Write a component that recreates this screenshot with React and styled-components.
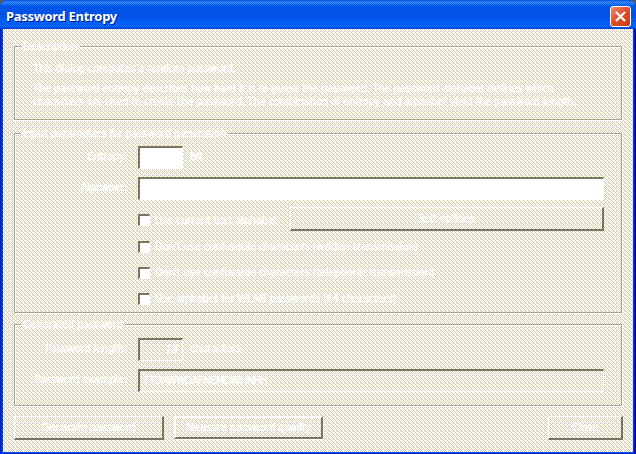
import React from "react";
import styled, { createGlobalStyle, css } from "styled-components";

const Global = createGlobalStyle`
  * { box-sizing: border-box; }
  body { margin: 0; background: #555; overflow: hidden; }
`;

/* Fixed attachment keeps the dither in phase across nested surfaces. */
const dither = css`
  background:
    conic-gradient(from 270deg at 1px 1px, #ffff99 90deg, transparent 0) 1px 0 / 4px 4px fixed,
    conic-gradient(from 270deg at 1px 1px, #ffff99 90deg, transparent 0) 3px 2px / 4px 4px fixed,
    conic-gradient(from 270deg at 1px 1px, #ffcccc 90deg, transparent 0) 2px 1px / 4px 4px fixed,
    repeating-conic-gradient(#c8c8c0 0 25%, #ffffff 0 50%) 0 0 / 2px 2px fixed;
`;

const Window = styled.div`
  width: 636px;
  height: 454px;
  display: flex;
  flex-direction: column;
  border-radius: 7px 7px 0 0;
  overflow: hidden;
  background: linear-gradient(90deg, #0022cc 1px, #0055ff 3px, #0055ff 633px, #0022cc 634px, #000099);
  font: 11px/13px "DejaVu Sans Condensed", "DejaVu Sans", sans-serif;
  letter-spacing: -0.17px;
  color: #fff;
  -webkit-text-stroke: 0.35px #fff;
`;

const TitleBar = styled.header`
  height: 29px;
  flex: none;
  display: flex;
  align-items: center;
  justify-content: space-between;
  padding: 3px 5px 0 6px;
  background:
    repeating-conic-gradient(#0033cc66 0 25%, transparent 0 50%) 0 5px / 2px 2px,
    linear-gradient(#0058e0 0, #3a93ff 2px, #2080ff 4px, #0060ee 6px, #0058ee 15px, #0064ff 20px, #0070ff 26px, #0044cc 29px);
`;

const Title = styled.h1`
  margin: 0;
  font: bold 13px/20px "Noto Sans", sans-serif;
  letter-spacing: -0.3px;
  -webkit-text-stroke: 0;
  text-shadow: 1px 1px 0 #001a80;
`;

const CloseIcon = styled.button`
  width: 21px;
  height: 21px;
  padding: 0;
  border: 1px solid #fff;
  border-radius: 3px;
  background: linear-gradient(135deg, #f09070, #e0512b 45%, #c83a10);
  svg { display: block; }
`;

const Body = styled.main`
  flex: 1;
  margin: 0 3px 2px;
  padding: 17px 10px 0 11px;
  ${dither}
  box-shadow: 0 1px 0 #0055ff, 0 2px 0 #0022aa;
`;

const Group = styled.section`
  width: 608px;
  height: ${(p) => p.$h}px;
  margin-bottom: ${(p) => p.$gap}px;
  border: 1px solid #a6a68c;
  box-shadow: 1px 1px 0 #fff, inset 1px 1px 0 #fff;
`;

const Legend = styled.h2`
  width: max-content;
  height: 13px;
  margin: -7px 0 0 6px;
  padding: 0 2px;
  font: inherit;
  ${dither}
`;

const Paragraph = styled.p`
  margin: ${(p) => p.$top}px 0 0 18px;
  white-space: nowrap;
`;

const Row = styled.div`
  display: flex;
  align-items: center;
  height: ${(p) => p.$h || 23}px;
  margin-top: ${(p) => p.$top}px;
`;

const Label = styled.label`
  width: 112px;
  margin-right: 11px;
  padding-bottom: 2px;
  text-align: right;
  white-space: nowrap;
`;

const Unit = styled.span`
  margin-left: 7px;
  padding-bottom: 2px;
`;

const Field = styled.input`
  width: ${(p) => p.$w}px;
  height: 23px;
  padding: 0 4px 2px;
  border: solid;
  border-width: 2px 1px 1px 2px;
  border-color: #77775f #fff #fff #77775f;
  border-radius: 0;
  outline: 0;
  font: inherit;
  letter-spacing: ${(p) => p.$ls || 0}px;
  color: #fff;
  text-align: ${(p) => p.$align || "left"};
  background: ${(p) => (p.$plain ? "#fff" : "transparent")};
`;

const CheckLine = styled.label`
  display: flex;
  align-items: center;
  width: ${(p) => p.$w || "auto"};
  height: 13px;
  margin-left: 123px;
  margin-top: ${(p) => p.$top || 0}px;
  gap: 5px;
  white-space: nowrap;
`;

const Box = styled.span`
  width: 12px;
  height: 12px;
  border: solid;
  border-width: 2px 1px 1px 2px;
  border-color: #77775f #fff #fff #77775f;
  background: #fff;
`;

const Button = styled.button`
  width: ${(p) => p.$w}px;
  height: 24px;
  padding: 0;
  border: solid;
  border-width: 1px 2px 2px 1px;
  border-color: #fff #77775f #77775f #fff;
  font: inherit;
  letter-spacing: inherit;
  color: #fff;
  background: transparent;
`;

const StrongButton = styled(Button)`
  height: 23px;
  border-width: 2px;
  box-shadow: 1px 1px 0 #fff;
`;

const Footer = styled.footer`
  display: flex;
  gap: 10px;
  & > :last-child { margin-left: auto; }
`;

const checks = [
  "Don't use confusable characters (written transmission)",
  "Don't use confusable characters (telephonic transmission)",
  "Use alphabet for WLAN passwords (64 characters)",
];

export default function App() {
  return (
    <>
      <Global />
      <Window>
        <TitleBar>
          <Title>Password Entropy</Title>
          <CloseIcon aria-label="Close window">
            <svg width="19" height="19" viewBox="0 0 19 19">
              <path d="M5 5l9 9M14 5l-9 9" stroke="#fff" strokeWidth="2.2" />
            </svg>
          </CloseIcon>
        </TitleBar>
        <Body>
          <Group $h={74} $gap={13}>
            <Legend>Description</Legend>
            <Paragraph $top={9}>This dialog computes a random password.</Paragraph>
            <Paragraph $top={7}>
              The password entropy describes how hard it is to guess the password. The password alphabet defines which
              <br />
              characters are used to create the password. The combination of entropy and alphabet yield the password length.
            </Paragraph>
          </Group>
          <Group $h={180} $gap={11}>
            <Legend>Input parameters for password generation</Legend>
            <Row $top={6}>
              <Label>Entropy:</Label>
              <Field $w={45} $plain />
              <Unit>bit</Unit>
            </Row>
            <Row $top={8}>
              <Label>Alphabet:</Label>
              <Field $w={466} $plain />
            </Row>
            <Row $top={7} $h={24}>
              <CheckLine $w="152px" $top={2}><Box />Use current text alphabet</CheckLine>
              <Button $w={314}>Text options</Button>
            </Row>
            {checks.map((c, i) => (
              <CheckLine key={c} $top={i ? 13 : 9}><Box />{c}</CheckLine>
            ))}
          </Group>
          <Group $h={82} $gap={10}>
            <Legend>Generated password</Legend>
            <Row $top={7}>
              <Label>Password length:</Label>
              <Field $w={45} $align="right" defaultValue="18" />
              <Unit>characters</Unit>
            </Row>
            <Row $top={8}>
              <Label>Password example:</Label>
              <Field $w={466} $ls={-0.6} defaultValue="FTDAWWDAFNEMDWHNHH" />
            </Row>
          </Group>
          <Footer>
            <Button $w={150}>Generate password</Button>
            <StrongButton $w={149}>Measure password quality</StrongButton>
            <Button $w={75}>Close</Button>
          </Footer>
        </Body>
      </Window>
    </>
  );
}
